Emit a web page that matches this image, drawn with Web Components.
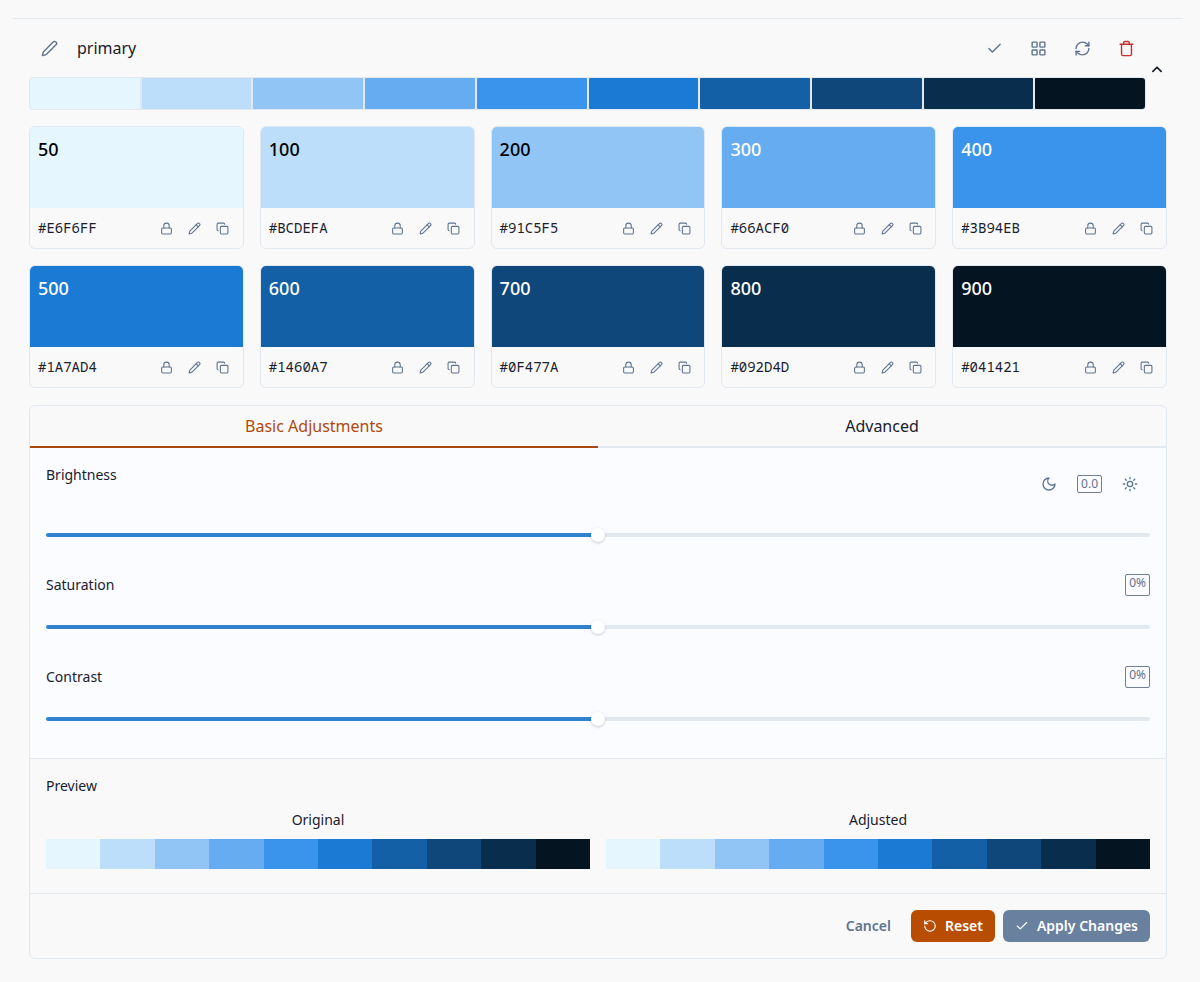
<!DOCTYPE html>
<html lang="en">
<head>
<meta charset="utf-8">
<title>Palette editor</title>
<style>
body { margin: 0; background: #f9f9f9; color: #1a202c; font: 16px/24px "Noto Sans", "Open Sans", sans-serif; }
</style>
</head>
<body>
<palette-editor name="primary"></palette-editor>
<script>
const COLORS = [
  ['50', '#E6F6FF'], ['100', '#BCDEFA'], ['200', '#91C5F5'], ['300', '#66ACF0'], ['400', '#3B94EB'],
  ['500', '#1A7AD4'], ['600', '#1460A7'], ['700', '#0F477A'], ['800', '#092D4D'], ['900', '#041421']
];

const PENCIL = '<path d="M21.174 6.812a1 1 0 0 0-3.986-3.987L3.842 16.174a2 2 0 0 0-.5.83l-1.321 4.352a.5.5 0 0 0 .623.622l4.353-1.32a2 2 0 0 0 .83-.497z"/>';
const ICONS = {
  edit: PENCIL,
  tipped: PENCIL + '<path d="m15 5 4 4"/>',
  check: '<path d="M20 6 9 17l-5-5"/>',
  grid: '<rect x="3" y="3" width="7" height="7" rx="1"/><rect x="14" y="3" width="7" height="7" rx="1"/><rect x="14" y="14" width="7" height="7" rx="1"/><rect x="3" y="14" width="7" height="7" rx="1"/>',
  refresh: '<path d="M3 12a9 9 0 0 1 9-9 9.75 9.75 0 0 1 6.74 2.74L21 8"/><path d="M21 3v5h-5"/><path d="M21 12a9 9 0 0 1-9 9 9.75 9.75 0 0 1-6.74-2.74L3 16"/><path d="M8 16H3v5"/>',
  trash: '<path d="M3 6h18"/><path d="M19 6v14a2 2 0 0 1-2 2H7a2 2 0 0 1-2-2V6"/><path d="M8 6V4a2 2 0 0 1 2-2h4a2 2 0 0 1 2 2v2"/>',
  chevron: '<path d="m5 16 7-7 7 7"/>',
  lock: '<rect x="3" y="11" width="18" height="11" rx="2"/><path d="M7 11V7a5 5 0 0 1 10 0v4"/>',
  copy: '<rect x="8" y="8" width="14" height="14" rx="2"/><path d="M4 16a2 2 0 0 1-2-2V4a2 2 0 0 1 2-2h10a2 2 0 0 1 2 2"/>',
  moon: '<path d="M12 3a6 6 0 0 0 9 9 9 9 0 1 1-9-9Z"/>',
  sun: '<circle cx="12" cy="12" r="4"/><path d="M12 2v2M12 20v2M4.93 4.93l1.41 1.41M17.66 17.66l1.41 1.41M2 12h2M20 12h2M6.34 17.66l-1.41 1.41M19.07 4.93l-1.41 1.41"/>',
  reset: '<path d="M3 12a9 9 0 1 0 9-9 9.75 9.75 0 0 0-6.74 2.74L3 8"/><path d="M3 3v5h5"/>'
};

function define(name, css, render) {
  customElements.define(name, class extends HTMLElement {
    connectedCallback() {
      if (this.shadowRoot) return;
      const root = this.attachShadow({ mode: 'open' });
      root.innerHTML = '<style>*{box-sizing:border-box}button{font:inherit;color:inherit;background:none;border:0;padding:0;margin:0;cursor:pointer}' + css + '</style>' + render(this);
    }
  });
}

define('ui-icon',
  ':host{display:inline-flex;flex:none;width:var(--icon-size,16px);height:var(--icon-size,16px)} svg{display:block;width:100%;height:100%;fill:none;stroke:currentColor;stroke-width:var(--icon-stroke,2);stroke-linecap:round;stroke-linejoin:round}',
  el => `<svg viewBox="0 0 24 24" aria-hidden="true">${ICONS[el.getAttribute('name')]}</svg>`);

define('icon-button',
  ':host{display:block;color:#5f7491} button{display:grid;place-items:center;width:var(--button-size,40px);height:var(--button-size,40px);border-radius:6px}',
  el => `<button type="button" aria-label="${el.getAttribute('label')}"><ui-icon name="${el.getAttribute('icon')}"></ui-icon></button>`);

define('color-strip',
  `:host{display:block}
   div{display:flex;height:30px}
   i{flex:1}
   :host([framed]) div{height:33px;gap:2px;padding:1px;border-radius:4px;background:#e2e8f0}
   :host([framed]) i{border-radius:1px}
   :host([framed]) i:first-child{border-radius:3px 1px 1px 3px}
   :host([framed]) i:last-child{border-radius:1px 3px 3px 1px}`,
  () => '<div>' + COLORS.map(c => `<i style="background:${c[1]}"></i>`).join('') + '</div>');

define('palette-header',
  `:host{display:block}
   .row{display:flex;align-items:center;height:48px;margin-bottom:5px}
   .name{flex:1;margin-left:8px}
   .tools{display:flex;gap:4px}
   .row{--icon-size:17px}
   .danger{color:#c53030}
   .wrap{display:flex;align-items:center;gap:1px}
   .main{flex:1}
   .toggle{width:20px;height:20px;margin-top:4px;--icon-size:14px;--icon-stroke:3;display:grid;place-items:center}`,
  el => `<div class="wrap"><div class="main"><div class="row">
    <icon-button icon="edit" label="Rename palette"></icon-button>
    <span class="name">${el.getAttribute('name')}</span>
    <div class="tools">
      <icon-button icon="check" label="Save"></icon-button>
      <icon-button icon="grid" label="Grid view"></icon-button>
      <icon-button icon="refresh" label="Regenerate"></icon-button>
      <icon-button class="danger" icon="trash" label="Delete"></icon-button>
    </div></div><color-strip framed></color-strip></div>
    <button class="toggle" type="button" aria-label="Collapse"><ui-icon name="chevron"></ui-icon></button></div>`);

define('color-card',
  `:host{display:block;border:1px solid #e2e8f0;border-radius:6px;overflow:hidden}
   .swatch{height:81px;padding:9px 8px;font-size:18px;line-height:27px;font-weight:500}
   .foot{display:flex;align-items:center;justify-content:space-between;height:40px;padding:0 6px 0 8px}
   code{font:14px/20px "Noto Sans Mono","DejaVu Sans Mono",monospace}
   .tools{display:flex;--button-size:28px;--icon-size:13px}`,
  el => {
    const hex = el.getAttribute('hex'), shade = el.getAttribute('shade');
    return `<div class="swatch" style="background:${hex};color:${+shade < 300 ? '#000' : '#fff'}">${shade}</div>
    <div class="foot"><code>${hex}</code><div class="tools">
      <icon-button icon="lock" label="Lock ${shade}"></icon-button>
      <icon-button icon="tipped" label="Edit ${shade}"></icon-button>
      <icon-button icon="copy" label="Copy ${shade}"></icon-button>
    </div></div>`;
  });

define('tab-bar',
  `:host{display:flex}
   button{flex:1;height:42px;border-bottom:2px solid #e2e8f0}
   button[aria-selected=true]{color:#b04a0a;border-color:#a8480f}`,
  () => '<button type="button" role="tab" aria-selected="true">Basic Adjustments</button><button type="button" role="tab" aria-selected="false">Advanced</button>');

define('adjust-slider',
  `:host{display:block}
   .top{display:flex;justify-content:space-between;margin-bottom:24px}
   label{font-size:14px;line-height:22px}
   input{display:block;width:100%;height:14px;margin:0;appearance:none;background:none}
   input::-webkit-slider-runnable-track{height:4px;border-radius:2px;background:linear-gradient(90deg,#3182ce 50%,#e2e8f0 50%)}
   input::-webkit-slider-thumb{appearance:none;width:14px;height:14px;margin-top:-5px;border-radius:7px;background:#fff;box-shadow:0 1px 3px rgba(0,0,0,.2)}`,
  el => `<div class="top"><label for="range">${el.getAttribute('label')}</label><slot></slot></div>
   <input id="range" type="range" min="-100" max="100" value="0">`);

define('value-badge',
  ':host{display:block;padding:0 3px;border:1px solid #718096;border-radius:2px;color:#5f7491;font-size:12px;line-height:16px}',
  () => '<slot></slot>');

define('action-button',
  `:host{display:block}
   button{display:flex;align-items:center;gap:8px;height:32px;padding:0 12px;border-radius:6px;font-size:14px;line-height:20px;font-weight:600;color:#5f7491;--icon-size:14px}
   :host([tone=reset]) button{background:#b84c00;color:#fff}
   :host([tone=apply]) button{background:#69809f;color:#fff}`,
  el => `<button type="button">${el.hasAttribute('icon') ? `<ui-icon name="${el.getAttribute('icon')}"></ui-icon>` : ''}<slot></slot></button>`);

define('adjustment-panel',
  `:host{display:block;border:1px solid #e2e8f0;border-radius:6px;overflow:hidden}
   .sliders{display:grid;gap:32px;padding:16px 16px 32px;background:#fafcff}
   .light{display:flex;align-items:center;gap:8px}
   .preview{padding:16px 16px 24px;border-top:1px solid #e2e8f0;font-size:14px;line-height:22px}
   .pair{display:grid;grid-template-columns:1fr 1fr;gap:16px;margin-top:12px;text-align:center}
   .pair color-strip{margin-top:8px}
   .actions{display:flex;justify-content:flex-end;gap:8px;padding:16px;border-top:1px solid #e2e8f0}`,
  () => `<tab-bar role="tablist"></tab-bar>
   <div class="sliders">
    <adjust-slider label="Brightness"><div class="light"><icon-button icon="moon" label="Darker"></icon-button><value-badge>0.0</value-badge><icon-button icon="sun" label="Lighter"></icon-button></div></adjust-slider>
    <adjust-slider label="Saturation"><value-badge>0%</value-badge></adjust-slider>
    <adjust-slider label="Contrast"><value-badge>0%</value-badge></adjust-slider>
   </div>
   <div class="preview"><div>Preview</div><div class="pair">
    <div>Original<color-strip></color-strip></div><div>Adjusted<color-strip></color-strip></div></div></div>
   <div class="actions"><action-button>Cancel</action-button><action-button tone="reset" icon="reset">Reset</action-button><action-button tone="apply" icon="check">Apply Changes</action-button></div>`);

define('palette-editor',
  `:host{display:block;margin:18px 17px 18px 13px;padding:5px 16px 0;border-top:1px solid #e2e8f0}
   .cards{display:grid;grid-template-columns:repeat(5,1fr);gap:16px;margin:16px 0 17px}`,
  el => `<palette-header name="${el.getAttribute('name')}"></palette-header>
   <div class="cards">${COLORS.map(c => `<color-card shade="${c[0]}" hex="${c[1]}"></color-card>`).join('')}</div>
   <adjustment-panel></adjustment-panel>`);
</script>
</body>
</html>
